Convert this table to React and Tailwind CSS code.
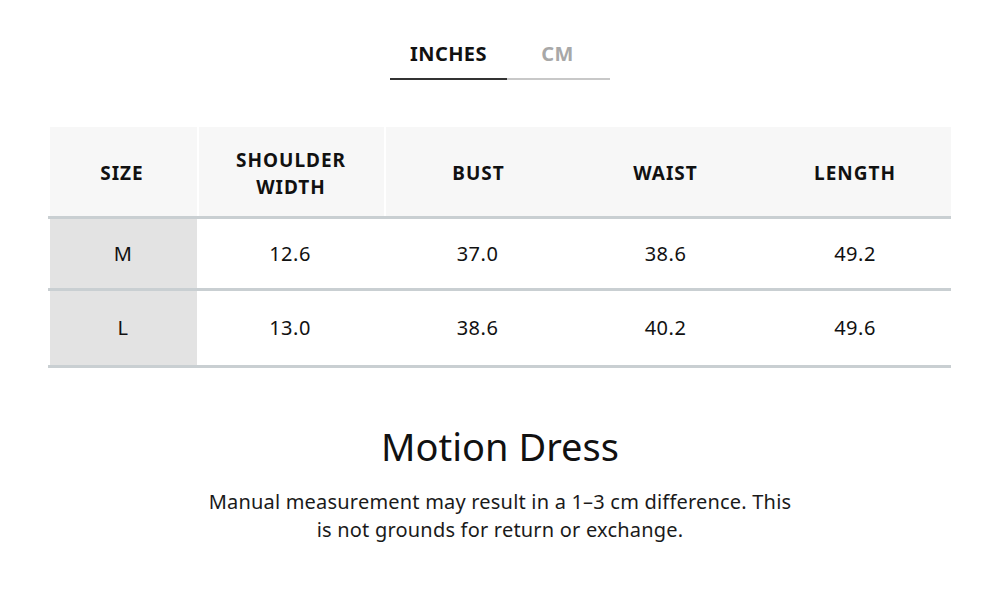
import React from "react";

const rows = [
  ["M", "12.6", "37.0", "38.6", "49.2", "h-[69px]"],
  ["L", "13.0", "38.6", "40.2", "49.6", "h-[74px]"],
];

export default function App() {
  return (
    <div className="w-[1000px] h-[589px] bg-white text-[#111] flex flex-col items-center" style={{ fontFamily: '"Noto Sans", "Open Sans", sans-serif' }}>
      {/* unit tabs */}
      <div className="mt-[38px] flex w-[220px]">
        <div className="w-[117px] flex flex-col items-center">
          <span className="text-[20px] font-bold leading-[32px] tracking-[0.4px] text-[#111]">INCHES</span>
          <div className="mt-[8px] h-[2px] w-full bg-[#333]" />
        </div>
        <div className="flex-1 flex flex-col items-center">
          <span className="text-[20px] font-bold leading-[32px] tracking-[0.4px] text-[#a8a8a8] -ml-[2px]">CM</span>
          <div className="mt-[8px] h-[2px] w-full bg-[#c8c8c8]" />
        </div>
      </div>

      {/* size table */}
      <div className="mt-[47px] w-[903px] ml-[-2px]">
        <div className="ml-[2px] grid grid-cols-[149px_187px_186px_188px_191px] h-[89px] bg-[#f7f7f7] text-[19px] font-bold leading-[27px] tracking-[1px]">
          <div className="flex items-center justify-center border-r-2 border-white pt-[4px] pr-[2px]">SIZE</div>
          <div className="flex items-center justify-center text-center border-r-2 border-white pt-[4px]">SHOULDER<br />WIDTH</div>
          <div className="flex items-center justify-center pt-[4px]">BUST</div>
          <div className="flex items-center justify-center pt-[4px]">WAIST</div>
          <div className="flex items-center justify-center pt-[4px]">LENGTH</div>
        </div>
        {rows.map((r, i) => (
          <div key={r[0]} className={"border-t-[3px] border-[#c9cfd2] " + (i === rows.length - 1 ? "border-b-[3px]" : "")}>
            <div className={"ml-[2px] grid grid-cols-[147px_187px_188px_188px_191px] text-[20px] tracking-[0.5px] " + r[5]}>
              <div className="flex items-center justify-center bg-[#e3e3e3]">{r[0]}</div>
              <div className="flex items-center justify-center">{r[1]}</div>
              <div className="flex items-center justify-center">{r[2]}</div>
              <div className="flex items-center justify-center">{r[3]}</div>
              <div className="flex items-center justify-center">{r[4]}</div>
            </div>
          </div>
        ))}
      </div>

      <h1 className="mt-[53px] text-[38px] leading-[50px] text-[#111]">Motion Dress</h1>
      <p className="mt-[17px] w-[590px] text-center text-[20px] leading-[28px] tracking-[0.2px] text-[#1a1a1a]">
        Manual measurement may result in a 1–3 cm difference. This is not grounds for return or exchange.
      </p>
    </div>
  );
}
